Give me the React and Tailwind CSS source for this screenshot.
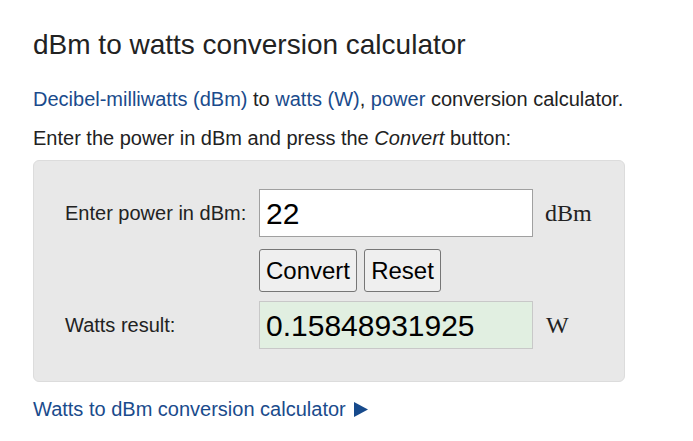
export default function App() {
  return (
    <div className="min-h-[441px] w-[693px] bg-white px-[33px] text-[#222]" style={{ fontFamily: '"Liberation Sans", Arial, sans-serif' }}>
      <h1 className="pt-[29px] text-[28px] leading-[32px] font-normal text-[#222]">dBm to watts conversion calculator</h1>
      <p className="mt-[26px] text-[20px] leading-[24px]">
        <a className="text-[#1a4b8c]">Decibel-milliwatts (dBm)</a> to <a className="text-[#1a4b8c]">watts (W)</a>, <a className="text-[#1a4b8c]">power</a> conversion calculator.
      </p>
      <p className="mt-[15px] text-[20px] leading-[24px]">
        Enter the power in dBm and press the <i>Convert</i> button:
      </p>
      <div className="mt-[10px] h-[222px] w-[592px] rounded-[6px] border border-[#dcdcdc] bg-[#e8e8e8] pl-[31px] pt-[28px]">
        <div className="flex items-center">
          <div className="w-[194px] text-[20px] text-[#222]">Enter power in dBm:</div>
          <div className="flex h-[48px] w-[274px] items-center border border-[#a0a0a0] bg-white pl-[6px] text-[30px] text-black">22</div>
          <div className="ml-[12px] text-[24px] text-[#222]" style={{ fontFamily: '"Liberation Serif", "Times New Roman", serif' }}>dBm</div>
        </div>
        <div className="mt-[12px] flex gap-[7px] pl-[194px]">
          <button className="h-[43px] w-[98px] rounded-[3px] border border-[#767676] bg-[#efefef] text-[24px] text-black">Convert</button>
          <button className="h-[43px] w-[77px] rounded-[3px] border border-[#767676] bg-[#efefef] text-[24px] text-black">Reset</button>
        </div>
        <div className="mt-[9px] flex items-center">
          <div className="w-[194px] text-[20px] text-[#222]">Watts result:</div>
          <div className="flex h-[48px] w-[274px] items-center border border-[#c8c8c8] bg-[#e1efe1] pl-[6px] text-[30px] text-black">0.15848931925</div>
          <div className="ml-[13px] text-[24px] text-[#222]" style={{ fontFamily: '"Liberation Serif", "Times New Roman", serif' }}>W</div>
        </div>
      </div>
      <p className="mt-[15px] flex items-center text-[20px] leading-[24px]">
        <a className="flex items-center text-[#1a4b8c]">
          Watts to dBm conversion calculator
          <svg className="ml-[7px]" width="15" height="15" viewBox="0 0 15 15">
            <polygon points="1,0 15,7.5 1,15" fill="#174a8c" />
          </svg>
        </a>
      </p>
    </div>
  );
}
